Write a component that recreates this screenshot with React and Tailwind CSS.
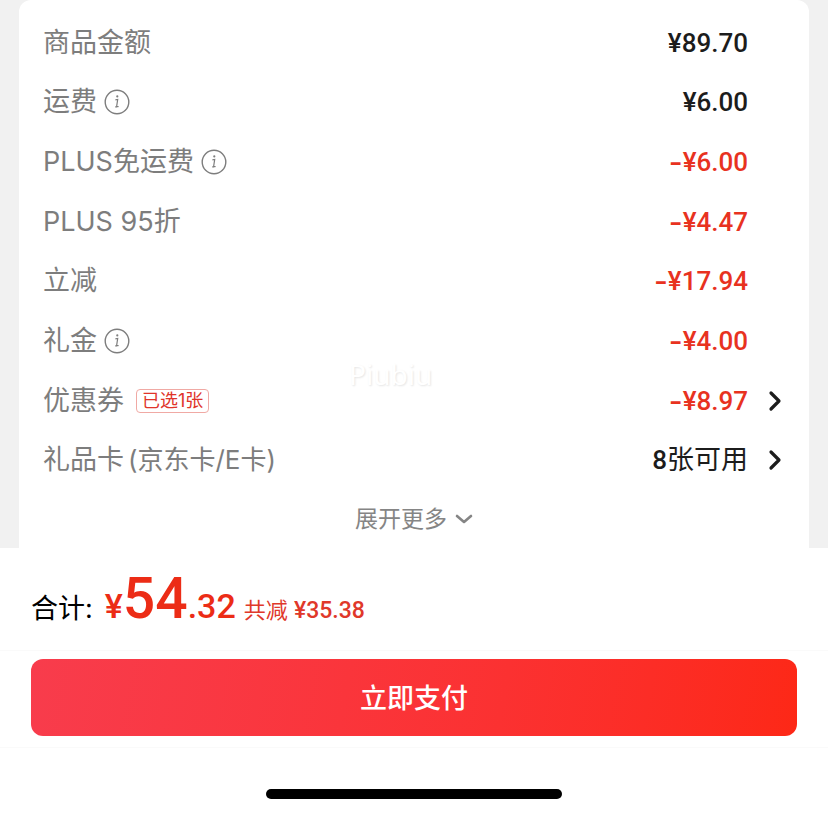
import React, { useState } from 'react'

const rows = [
    { label: '商品金额', value: '¥89.70' },
    { label: '运费', info: true, value: '¥6.00' },
    { label: 'PLUS免运费', info: true, value: '¥6.00', discount: true },
    { label: 'PLUS 95折', value: '¥4.47', discount: true },
    { label: '立减', value: '¥17.94', discount: true },
    { label: '礼金', info: true, value: '¥4.00', discount: true },
    { label: '优惠券', tag: '已选1张', value: '¥8.97', discount: true, link: true },
    { label: '礼品卡', note: '(京东卡/E卡)', value: '8', unit: '张可用', link: true },
]

const InfoIcon = () => (
    <svg className="h-[26px] w-[26px]" viewBox="0 0 26 26" fill="none" stroke="currentColor">
        <circle cx="13" cy="13" r="11.8" strokeWidth="1.4" />
        <path d="M11.400 10.900l2.300-.5-1 6.600q-.1 1.100 1.900.5M11.200 17.800h1.800" strokeWidth="1.2" />
        <circle cx="13.300" cy="7.400" r="1.100" fill="currentColor" stroke="none" />
    </svg>
)

const ChevronRight = () => (
    <svg className="h-6 w-6" viewBox="0 0 24 24" fill="none" stroke="currentColor" strokeWidth="3.2" strokeLinecap="round" strokeLinejoin="round">
        <path d="M8 4l8 8-8 8" />
    </svg>
)

const PriceRow = ({ row }) => {
    return (
        <div className="flex items-center justify-between">
            <dt className="flex items-center text-[27px] leading-9 text-[#7d7d7d]">
                <span>{row.label}</span>
                {row.info && (
                    <button type="button" aria-label={`${row.label}说明`} className="ml-[7px]">
                        <InfoIcon />
                    </button>
                )}
                {row.tag && (
                    <span className="ml-3 flex h-6 items-center rounded-sm border border-[#f0a9a4] px-[5px] text-[18px] text-[#e0342a]">{row.tag}</span>
                )}
                {row.note && <span className="ml-1 text-[26px]">{row.note}</span>}
            </dt>
            <dd className={`flex items-center text-[26px] leading-9 ${row.discount ? 'text-[#e8321f]' : 'text-[#1c1c1c]'}`}>
                {row.discount && <span className="text-[30px] font-medium">-</span>}
                <span className="font-['Roboto','Noto_Sans_CJK_SC',sans-serif] font-medium">{row.value}</span>
                {row.unit && <span className="text-[27px]">{row.unit}</span>}
                <span className="flex w-[61px] justify-center pr-2 text-[#1c1c1c]">
                    {row.link && (
                        <button type="button" aria-label={row.label}>
                            <ChevronRight />
                        </button>
                    )}
                </span>
            </dd>
        </div>
    )
}

const App = () => {
    const [expanded, setExpanded] = useState(false)

    return (
        <div className="min-h-screen bg-white font-['Inter','Noto_Sans_CJK_SC',sans-serif]">
            <main className="bg-[#f1f1f1] px-[19px]">
                <section className="relative rounded-t-xl bg-white pt-[13px] pl-6">
                    <dl className="grid min-h-[477px] auto-rows-fr">
                        {rows.map((row) => (
                            <PriceRow key={row.label} row={row} />
                        ))}
                    </dl>
                    <button
                        type="button"
                        aria-expanded={expanded}
                        onClick={() => setExpanded(!expanded)}
                        className="flex h-[58px] w-full items-center justify-center gap-2 pr-6 text-[23px] text-[#858585]"
                    >
                        展开更多
                        <svg className="h-[18px] w-[18px]" viewBox="0 0 18 18" fill="none" stroke="currentColor" strokeWidth="2.6" strokeLinecap="round" strokeLinejoin="round">
                            <path d="M2 6l7 6 7-6" />
                        </svg>
                    </button>
                    {/* Watermark */}
                    <span className="pointer-events-none absolute top-[356px] left-[330px] font-['Noto_Sans',sans-serif] text-[28px] leading-9 text-white [text-shadow:1px_1px_2px_#e6e6e6]">
                        Piubiu
                    </span>
                </section>
            </main>

            <footer className="flex flex-col">
                <div className="flex h-[102px] items-baseline px-[31px] pt-2">
                    <span className="text-[27px] text-black">合计:</span>
                    <strong className="ml-3 font-['Roboto',sans-serif] text-[34px] font-medium text-[#ec2c16]">
                        ¥<span className="text-[57px]">54</span>.32
                    </strong>
                    <span className="ml-2 text-[22px] text-[#e0382a]">
                        共减 <span className="font-['Roboto',sans-serif] text-[23px] font-medium">¥35.38</span>
                    </span>
                </div>
                <div className="border-y border-[#fafafa] px-[31px] pt-2 pb-[11px]">
                    <button type="button" className="h-[77px] w-full rounded-xl bg-linear-100 from-[#f83c4c] to-[#fd2816] pt-1 text-[27px] font-medium text-white">
                        立即支付
                    </button>
                </div>
                <div className="mx-auto mt-[41px] h-[10px] w-[296px] rounded-full bg-black"></div>
            </footer>
        </div>
    )
}

export default App
